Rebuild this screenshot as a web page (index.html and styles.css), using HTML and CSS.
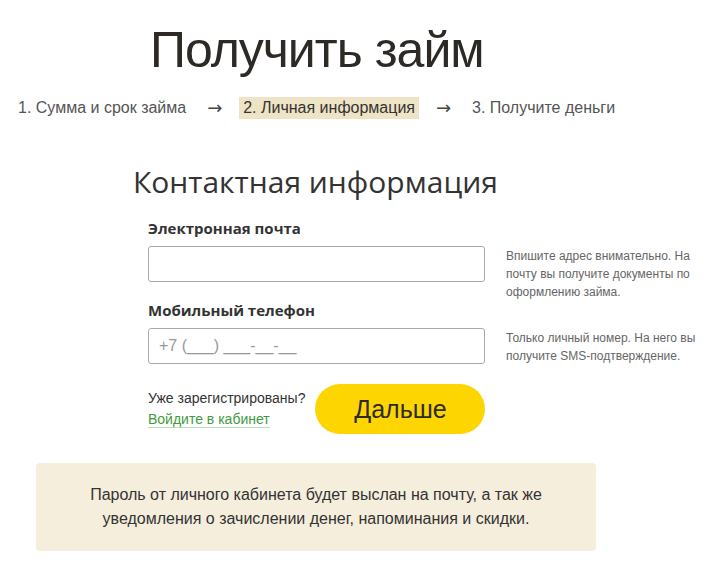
FILE: index.html
```html
<!DOCTYPE html>
<html lang="ru">
<head>
<meta charset="utf-8">
<link rel="stylesheet" href="styles.css">
</head>
<body>
<div class="page">
  <h1 class="title">Получить займ</h1>
  <div class="steps">
    <span class="step">1. Сумма и срок займа</span>
    <span class="arrow">→</span>
    <span class="step step-active">2. Личная информация</span>
    <span class="arrow">→</span>
    <span class="step">3. Получите деньги</span>
  </div>
  <h2 class="section-title">Контактная информация</h2>
  <div class="form">
    <div class="field">
      <div class="label">Электронная почта</div>
      <div class="row">
        <div class="input"></div>
        <div class="hint">Впишите адрес внимательно. На почту вы получите документы по оформлению займа.</div>
      </div>
    </div>
    <div class="field">
      <div class="label">Мобильный телефон</div>
      <div class="row">
        <div class="input"><span class="placeholder">+7 (___) ___-__-__</span></div>
        <div class="hint">Только личный номер. На него вы получите SMS-подтверждение.</div>
      </div>
    </div>
    <div class="actions">
      <div class="login">
        <div class="login-q">Уже зарегистрированы?</div>
        <a class="login-link">Войдите в кабинет</a>
      </div>
      <button class="btn">Дальше</button>
    </div>
  </div>
  <div class="notice">Пароль от личного кабинета будет выслан на почту, а так же<br>уведомления о зачислении денег, напоминания и скидки.</div>
</div>
</body>
</html>
```
FILE: styles.css
```css
* { box-sizing: border-box; }
body {
  margin: 0;
  background: #fff;
  font-family: "Liberation Sans", Arial, sans-serif;
  color: #333;
}
.page {
  width: 714px;
  height: 561px;
  overflow: hidden;
}
.title {
  margin: 22px 0 0 150px;
  font-weight: normal;
  font-size: 50px;
  line-height: 56px;
  letter-spacing: -1px;
  color: #2d2a26;
}
.steps {
  display: flex;
  align-items: center;
  margin: 19px 0 0 18px;
  font-size: 16px;
  color: #555;
  height: 22px;
}
.step {
  padding: 2px 4px;
  line-height: 18px;
}
.step:first-child { padding-left: 0; }
.step-active {
  background: #efe3c6;
  color: #333;
}
.arrow {
  margin: 0 17px;
  width: 15px;
  color: #444;
  font-family: "DejaVu Sans", sans-serif;
  font-size: 18px;
  line-height: 22px;
}
.section-title {
  margin: 45px 0 0 133px;
  font-family: "Open Sans", sans-serif;
  font-weight: normal;
  font-size: 30px;
  line-height: 36px;
  color: #333;
}
.form {
  margin: 18px 0 0 148px;
}
.field { margin-bottom: 18px; }
.label {
  font-family: "Open Sans", sans-serif;
  font-weight: bold;
  font-size: 15px;
  line-height: 20px;
  color: #333;
  margin-bottom: 8px;
}
.row {
  display: flex;
  align-items: flex-start;
  gap: 21px;
  height: 36px;
}
.input {
  width: 337px;
  height: 36px;
  flex: none;
  border: 1px solid #a9a9a9;
  border-radius: 3px;
  padding: 0 10px;
  display: flex;
  align-items: center;
}
.placeholder {
  font-family: "Liberation Sans", Arial, sans-serif;
  font-size: 16px;
  color: #999;
}
.hint {
  width: 200px;
  font-size: 12px;
  line-height: 18px;
  color: #666;
  margin-top: 1px;
}
.actions {
  display: flex;
  align-items: center;
  gap: 10px;
  margin-top: 20px;
}
.login { font-size: 14px; line-height: 21px; }
.login-q { color: #333; }
.login-link {
  color: #3f9b3f;
  text-decoration: none;
  border-bottom: 1px solid #b9dcb9;
}
.btn {
  width: 170px;
  height: 50px;
  border: none;
  border-radius: 25px;
  background: #fdd500;
  font-family: "Liberation Sans", Arial, sans-serif;
  font-size: 25px;
  color: #2d2a26;
  cursor: pointer;
}
.notice {
  margin: 29px 0 0 36px;
  width: 560px;
  height: 88px;
  background: #f5eedd;
  border-radius: 4px;
  display: flex;
  align-items: center;
  justify-content: center;
  text-align: center;
  font-size: 16px;
  line-height: 24px;
  color: #333;
}
```
